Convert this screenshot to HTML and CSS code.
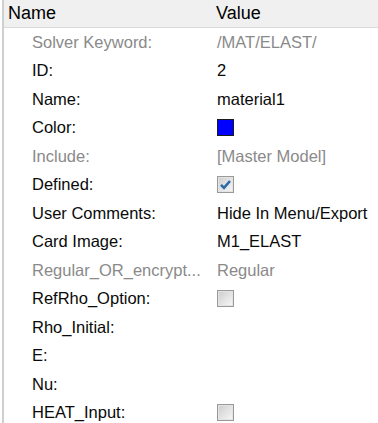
FILE: index.html
```html
<!DOCTYPE html>
<html lang="en">
<head>
    <meta charset="UTF-8">
    <title>Material Properties</title>
    <link rel="stylesheet" href="styles.css">
</head>
<body>
    <div class="panel">
        <div class="row header">
            <div class="cell name">Name</div>
            <div class="cell value">Value</div>
        </div>
        <div class="row muted">
            <div class="cell name">Solver Keyword:</div>
            <div class="cell value">/MAT/ELAST/</div>
        </div>
        <div class="row">
            <div class="cell name">ID:</div>
            <div class="cell value">2</div>
        </div>
        <div class="row">
            <div class="cell name">Name:</div>
            <div class="cell value">material1</div>
        </div>
        <div class="row">
            <div class="cell name">Color:</div>
            <div class="cell value"><span class="swatch"></span></div>
        </div>
        <div class="row muted">
            <div class="cell name">Include:</div>
            <div class="cell value">[Master Model]</div>
        </div>
        <div class="row">
            <div class="cell name">Defined:</div>
            <div class="cell value">
                <span class="checkbox">
                    <svg width="13" height="13" viewBox="0 0 13 13"><path d="M2 6.8 L5 9.8 L11 3" fill="none" stroke="#2a6ca8" stroke-width="2.6"/></svg>
                </span>
            </div>
        </div>
        <div class="row">
            <div class="cell name">User Comments:</div>
            <div class="cell value">Hide In Menu/Export</div>
        </div>
        <div class="row">
            <div class="cell name">Card Image:</div>
            <div class="cell value">M1_ELAST</div>
        </div>
        <div class="row muted">
            <div class="cell name">Regular_OR_encrypt...</div>
            <div class="cell value">Regular</div>
        </div>
        <div class="row">
            <div class="cell name">RefRho_Option:</div>
            <div class="cell value"><span class="checkbox"></span></div>
        </div>
        <div class="row">
            <div class="cell name">Rho_Initial:</div>
            <div class="cell value"></div>
        </div>
        <div class="row">
            <div class="cell name">E:</div>
            <div class="cell value"></div>
        </div>
        <div class="row">
            <div class="cell name">Nu:</div>
            <div class="cell value"></div>
        </div>
        <div class="row">
            <div class="cell name">HEAT_Input:</div>
            <div class="cell value"><span class="checkbox"></span></div>
        </div>
    </div>
</body>
</html>
```

FILE: styles.css
```css
/* General */
body {
    margin: 0;
    padding: 0;
    background: #fff;
    font-family: "Liberation Sans", Arial, sans-serif;
    font-size: 16.5px;
    color: #0a0a0a;
}

/* Property panel */
.panel {
    margin-left: 2px;
    border-left: 2px solid #cfcfcf;
    min-height: 423px;
}

.row {
    display: grid;
    grid-template-columns: 212px 1fr;
    align-items: center;
    height: 28.5px;
}

.cell {
    white-space: nowrap;
}

.row .name {
    padding-left: 28px;
}

.row .value {
    padding-left: 1px;
    display: flex;
    align-items: center;
}

.muted {
    color: #8a8a8a;
}

/* Header */
.row.header {
    height: 27px;
    background: #f0f0f0;
    border-bottom: 1px solid #dadada;
    font-size: 18px;
    color: #000;
}

.row.header .name {
    padding-left: 4px;
}

.row.header .value {
    padding-left: 0;
}

/* Widgets */
.swatch {
    display: inline-block;
    width: 15px;
    height: 15px;
    background: #0000ff;
    border: 1px solid #1a1a1a;
}

.checkbox {
    display: inline-flex;
    align-items: center;
    justify-content: center;
    box-sizing: border-box;
    width: 17px;
    height: 17px;
    border: 1px solid #999;
    background: linear-gradient(135deg, #cdcdcd, #f8f8f8);
    box-shadow: inset 0 0 0 1px #e4e4e4;
}
```
